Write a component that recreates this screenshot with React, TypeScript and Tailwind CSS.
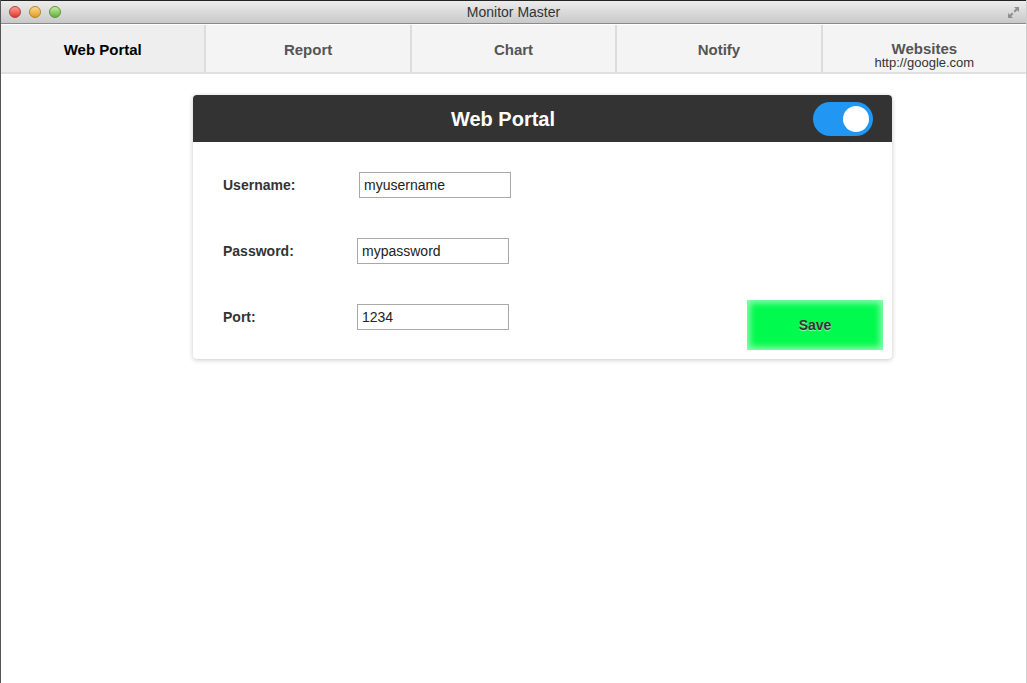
import React from "react";

const tabs = ["Web Portal", "Report", "Chart", "Notify", "Websites"];

function Field({ label, value, offset }: { label: string; value: string; offset: string }) {
  return (
    <div className="flex items-center h-[26px]">
      <div className="w-[134px] text-[14px] font-bold text-[#333]">{label}</div>
      <div className={`${offset} w-[152px] h-[26px] border border-[#a9a9a9] bg-white px-[4px] flex items-center text-[14px] text-[#222]`}>
        {value}
      </div>
    </div>
  );
}

export default function App() {
  return (
    <div
      className="w-[1027px] h-[683px] bg-white flex flex-col overflow-hidden border-l border-l-[#555] border-r border-r-[#cfcfcf]"
      style={{ fontFamily: '"Liberation Sans", Arial, sans-serif' }}
    >
      {/* Title bar */}
      <div className="h-[24px] shrink-0 flex items-center relative bg-gradient-to-b from-[#ececec] to-[#c9c9c9] border-t border-t-[#222] border-b border-b-[#8a8a8a]">
        <div className="flex items-center gap-[8px] pl-[8px]">
          <span className="w-[12px] h-[12px] rounded-full bg-gradient-to-b from-[#f99a92] to-[#e0312a] border border-[#b6403b]" />
          <span className="w-[12px] h-[12px] rounded-full bg-gradient-to-b from-[#fbd88a] to-[#e39c1c] border border-[#b7831f]" />
          <span className="w-[12px] h-[12px] rounded-full bg-gradient-to-b from-[#c7ea9b] to-[#5fb23c] border border-[#5d9634]" />
        </div>
        <div className="absolute left-0 right-0 top-[3px] text-center text-[14px] leading-[16px] text-[#333]">
          Monitor Master
        </div>
        <svg className="absolute right-[6px] top-[5px]" width="13" height="13" viewBox="0 0 13 13">
          <path d="M7 1h5v5l-1.8-1.8L8 6.4 6.6 5 8.8 2.8z" fill="#8f8f8f" />
          <path d="M6 12H1V7l1.8 1.8L5 6.6 6.4 8 4.2 10.2z" fill="#8f8f8f" />
        </svg>
      </div>

      {/* Tabs */}
      <div className="h-[50px] shrink-0 flex border-t border-t-white border-b-2 border-b-[#e0e0e0]">
        {tabs.map((t, i) => (
          <div
            key={t}
            className={`flex-1 flex flex-col items-center ${i === 4 ? "justify-start pt-[16px]" : "justify-center pt-[3px]"} ${i > 0 ? "border-l-2 border-l-[#dcdcdc]" : ""} ${
              i === 0 ? "bg-[#eeeeee] text-black" : "bg-[#f4f4f4] text-[#555]"
            }`}
          >
            <div className="text-[15px] font-bold leading-[16px]">{t}</div>
            {i === 4 && <div className="text-[13px] leading-[12px] text-[#333]">http://google.com</div>}
          </div>
        ))}
      </div>

      {/* Content */}
      <div className="pt-[21px] pl-[192px]">
        <div className="w-[699px] rounded-[4px] bg-white shadow-[0_1px_5px_rgba(0,0,0,0.22)]">
          <div className="h-[47px] bg-[#333333] rounded-t-[4px] flex items-center pr-[19px]">
            <div className="flex-1 text-center text-white text-[20px] font-bold">Web Portal</div>
            <div className="w-[60px] h-[34px] rounded-full bg-[#2196f3] flex items-center justify-end pr-[4px]">
              <div className="w-[26px] h-[26px] rounded-full bg-white" />
            </div>
          </div>
          <div className="flex justify-between">
            <div className="flex flex-col gap-[40px] pl-[30px] pt-[30px] pb-[29px]">
              <Field label="Username:" value="myusername" offset="ml-[2px]" />
              <Field label="Password:" value="mypassword" offset="" />
              <Field label="Port:" value="1234" offset="" />
            </div>
            <div className="self-end mb-[9px] mr-[9px] w-[136px] h-[50px] bg-[#00fa4e] shadow-[inset_0_0_6px_3px_rgba(255,255,255,0.55)] flex items-center justify-center text-[14px] font-bold text-[#333] [text-shadow:0_1px_1px_rgba(255,255,255,0.6)]">
              Save
            </div>
          </div>
        </div>
      </div>
    </div>
  );
}
